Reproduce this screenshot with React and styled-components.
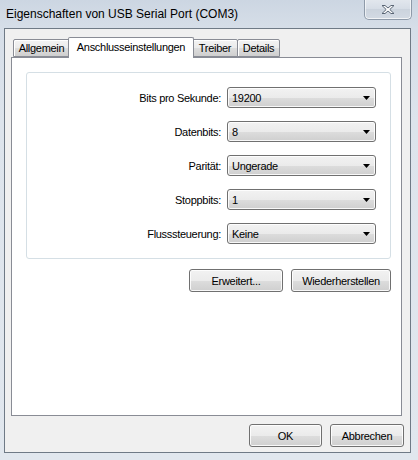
import React from "react";
import styled, { createGlobalStyle } from "styled-components";

const Global = createGlobalStyle`
  html, body { margin: 0; padding: 0; }
  body {
    background: #d9e1ea;
    font-family: "Liberation Sans", Arial, sans-serif;
    font-size: 11px;
    letter-spacing: -0.3px;
    color: #000;
  }
  * { box-sizing: border-box; }
`;

const Window = styled.div`
  width: 418px;
  height: 460px;
  display: flex;
  flex-direction: column;
  background: linear-gradient(180deg, #ccd6e2 0px, #d6dee8 28px, #dde4ec 120px, #e1e7ee 100%);
  overflow: hidden;
`;

const TitleBar = styled.div`
  height: 28px;
  display: flex;
  align-items: flex-start;
  padding: 0 6px 0 6px;
`;

const Title = styled.div`
  font-family: "Liberation Sans", Arial, sans-serif;
  font-size: 12px;
  letter-spacing: 0;
  line-height: 28px;
  color: #000;
  flex: 1;
  white-space: nowrap;
`;

const CloseButton = styled.div`
  width: 48px;
  height: 21px;
  margin-top: -1px;
  border: 1px solid #8e9aa9;
  border-top: none;
  border-radius: 0 0 5px 5px;
  background: linear-gradient(180deg, #e3e8ee 0%, #d6dde6 50%, #cbd3dd 51%, #d3dae3 100%);
  box-shadow: inset 0 -1px 0 rgba(255,255,255,0.7), inset 1px 0 0 rgba(255,255,255,0.6), inset -1px 0 0 rgba(255,255,255,0.6);
  display: flex;
  align-items: center;
  justify-content: center;
`;

const Client = styled.div`
  margin: 0 7px 7px 4px;
  flex: 1;
  border: 1px solid #6f7a86;
  background: #f0f0f0;
  padding: 8px 8px 5px 6px;
  display: flex;
  flex-direction: column;
`;

const TabStrip = styled.div`
  height: 20px;
  display: flex;
  align-items: flex-end;
  padding-left: 2px;
  position: relative;
  z-index: 2;
`;

const Tab = styled.div`
  width: ${(p) => p.$w}px;
  height: ${(p) => (p.$active ? 21 : 18)}px;
  margin-left: ${(p) => p.$ml || 0}px;
  margin-bottom: ${(p) => (p.$active ? -1 : 0)}px;
  border: 1px solid #898c95;
  border-bottom: ${(p) => (p.$active ? "none" : "1px solid #898c95")};
  border-radius: 2px 2px 0 0;
  background: ${(p) =>
    p.$active ? "#ffffff" : "linear-gradient(180deg, #f3f3f3 0%, #ebebeb 50%, #dddddd 51%, #cfcfcf 100%)"};
  position: relative;
  z-index: ${(p) => (p.$active ? 2 : 1)};
  display: flex;
  justify-content: center;
  align-items: ${(p) => (p.$active ? "flex-start" : "center")};
  padding-top: ${(p) => (p.$active ? 3 : 0)}px;
  white-space: nowrap;
  box-shadow: ${(p) => (p.$active ? "none" : "inset 1px 1px 0 #fff")};
`;

const Pane = styled.div`
  height: 359px;
  border: 1px solid #898c95;
  background: #fff;
  padding: 14px 10px 0 14px;
  display: flex;
  flex-direction: column;
  position: relative;
  z-index: 1;
`;

const Group = styled.div`
  height: 187px;
  border: 1px solid #d5dfe5;
  border-radius: 3px;
  box-shadow: inset 1px 1px 0 #fff;
  display: grid;
  grid-template-columns: 1fr 149px;
  grid-auto-rows: 21px;
  column-gap: 6px;
  row-gap: 13px;
  padding: 14px 14px 0 0;
`;

const Label = styled.label`
  justify-self: end;
  align-self: center;
  white-space: nowrap;
`;

const Combo = styled.div`
  height: 21px;
  border: 1px solid #707070;
  border-radius: 3px;
  background: linear-gradient(180deg, #f2f2f2 0%, #ebebeb 50%, #dddddd 51%, #cfcfcf 100%);
  box-shadow: inset 0 0 0 1px rgba(255, 255, 255, 0.85);
  display: flex;
  align-items: center;
  padding: 0 5px 0 4px;
`;

const ComboValue = styled.span`
  flex: 1;
  padding-top: 1px;
`;

const Arrow = styled.svg`
  width: 7px;
  height: 4px;
  display: block;
`;

const ButtonRow = styled.div`
  display: flex;
  justify-content: flex-end;
  gap: ${(p) => p.$gap}px;
  margin-top: ${(p) => p.$mt}px;
  margin-right: ${(p) => p.$mr || 0}px;
`;

const Button = styled.div`
  width: ${(p) => p.$w}px;
  height: 23px;
  border: 1px solid #707070;
  border-radius: 3px;
  background: linear-gradient(180deg, #f2f2f2 0%, #ebebeb 50%, #dddddd 51%, #cfcfcf 100%);
  box-shadow: inset 0 0 0 1px rgba(255, 255, 255, 0.85);
  display: flex;
  align-items: center;
  justify-content: center;
  white-space: nowrap;
`;

const rows = [
  ["Bits pro Sekunde:", "19200"],
  ["Datenbits:", "8"],
  ["Parität:", "Ungerade"],
  ["Stoppbits:", "1"],
  ["Flusssteuerung:", "Keine"],
];

export default function App() {
  return (
    <>
      <Global />
      <Window>
        <TitleBar>
          <Title>Eigenschaften von USB Serial Port (COM3)</Title>
          <CloseButton>
            <svg width="14" height="11" viewBox="0 0 14 11">
              <path
                d="M1 1.5 L4 1.5 L7 4 L10 1.5 L13 1.5 L8.8 5.5 L13 9.5 L10 9.5 L7 7 L4 9.5 L1 9.5 L5.2 5.5 Z"
                fill="#ffffff"
                stroke="#5a6675"
                strokeWidth="1"
                strokeLinejoin="round"
              />
            </svg>
          </CloseButton>
        </TitleBar>
        <Client>
          <TabStrip>
            <Tab $w={57}>Allgemein</Tab>
            <Tab $w={126} $ml={-2} $active>
              Anschlusseinstellungen
            </Tab>
            <Tab $w={46} $ml={-2}>Treiber</Tab>
            <Tab $w={43} $ml={-1}>Details</Tab>
          </TabStrip>
          <Pane>
            <Group>
              {rows.map(([label, value]) => (
                <React.Fragment key={label}>
                  <Label>{label}</Label>
                  <Combo>
                    <ComboValue>{value}</ComboValue>
                    <Arrow viewBox="0 0 7 4">
                      <path d="M0 0 H7 L3.5 4 Z" fill="#000" />
                    </Arrow>
                  </Combo>
                </React.Fragment>
              ))}
            </Group>
            <ButtonRow $gap={8} $mt={10}>
              <Button $w={94}>Erweitert...</Button>
              <Button $w={100}>Wiederherstellen</Button>
            </ButtonRow>
          </Pane>
          <ButtonRow $gap={8} $mt={8} $mr={-2}>
            <Button $w={73}>OK</Button>
            <Button $w={74}>Abbrechen</Button>
          </ButtonRow>
        </Client>
      </Window>
    </>
  );
}
